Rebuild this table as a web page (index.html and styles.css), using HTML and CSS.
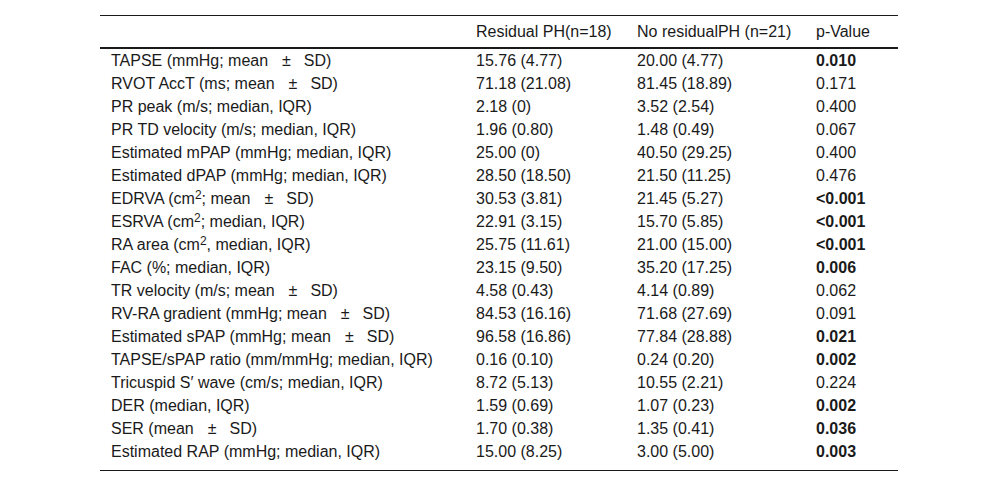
FILE: index.html
```html
<!DOCTYPE html>
<html>
<head>
<meta charset="utf-8">
<link rel="stylesheet" href="styles.css">
</head>
<body>
<table class="tbl">
  <thead>
    <tr>
      <th class="c1"></th>
      <th class="c2">Residual PH(n=18)</th>
      <th class="c3">No residualPH (n=21)</th>
      <th class="c4">p-Value</th>
    </tr>
  </thead>
  <tbody>
    <tr><td>TAPSE (mmHg; mean<span class="pm">±</span>SD)</td><td>15.76 (4.77)</td><td>20.00 (4.77)</td><td><b>0.010</b></td></tr>
    <tr><td>RVOT AccT (ms; mean<span class="pm">±</span>SD)</td><td>71.18 (21.08)</td><td>81.45 (18.89)</td><td>0.171</td></tr>
    <tr><td>PR peak (m/s; median, IQR)</td><td>2.18 (0)</td><td>3.52 (2.54)</td><td>0.400</td></tr>
    <tr><td>PR TD velocity (m/s; median, IQR)</td><td>1.96 (0.80)</td><td>1.48 (0.49)</td><td>0.067</td></tr>
    <tr><td>Estimated mPAP (mmHg; median, IQR)</td><td>25.00 (0)</td><td>40.50 (29.25)</td><td>0.400</td></tr>
    <tr><td>Estimated dPAP (mmHg; median, IQR)</td><td>28.50 (18.50)</td><td>21.50 (11.25)</td><td>0.476</td></tr>
    <tr><td>EDRVA (cm<sup>2</sup>; mean<span class="pm">±</span>SD)</td><td>30.53 (3.81)</td><td>21.45 (5.27)</td><td><b>&lt;0.001</b></td></tr>
    <tr><td>ESRVA (cm<sup>2</sup>; median, IQR)</td><td>22.91 (3.15)</td><td>15.70 (5.85)</td><td><b>&lt;0.001</b></td></tr>
    <tr><td>RA area (cm<sup>2</sup>, median, IQR)</td><td>25.75 (11.61)</td><td>21.00 (15.00)</td><td><b>&lt;0.001</b></td></tr>
    <tr><td>FAC (%; median, IQR)</td><td>23.15 (9.50)</td><td>35.20 (17.25)</td><td><b>0.006</b></td></tr>
    <tr><td>TR velocity (m/s; mean<span class="pm">±</span>SD)</td><td>4.58 (0.43)</td><td>4.14 (0.89)</td><td>0.062</td></tr>
    <tr><td>RV-RA gradient (mmHg; mean<span class="pm">±</span>SD)</td><td>84.53 (16.16)</td><td>71.68 (27.69)</td><td>0.091</td></tr>
    <tr><td>Estimated sPAP (mmHg; mean<span class="pm">±</span>SD)</td><td>96.58 (16.86)</td><td>77.84 (28.88)</td><td><b>0.021</b></td></tr>
    <tr><td>TAPSE/sPAP ratio (mm/mmHg; median, IQR)</td><td>0.16 (0.10)</td><td>0.24 (0.20)</td><td><b>0.002</b></td></tr>
    <tr><td>Tricuspid S′ wave (cm/s; median, IQR)</td><td>8.72 (5.13)</td><td>10.55 (2.21)</td><td>0.224</td></tr>
    <tr><td>DER (median, IQR)</td><td>1.59 (0.69)</td><td>1.07 (0.23)</td><td><b>0.002</b></td></tr>
    <tr><td>SER (mean<span class="pm">±</span>SD)</td><td>1.70 (0.38)</td><td>1.35 (0.41)</td><td><b>0.036</b></td></tr>
    <tr class="last"><td>Estimated RAP (mmHg; median, IQR)</td><td>15.00 (8.25)</td><td>3.00 (5.00)</td><td><b>0.003</b></td></tr>
  </tbody>
</table>
</body>
</html>
```
FILE: styles.css
```css
html, body {
  margin: 0;
  padding: 0;
  background: #ffffff;
}
body {
  padding: 15px 0 0 100px;
  font-family: "Liberation Sans", Arial, sans-serif;
  font-size: 16px;
  color: #1a1a1a;
}
.tbl {
  width: 798px;
  border-collapse: collapse;
  border-top: 1px solid #1a1a1a;
  border-bottom: 1px solid #1a1a1a;
}
.tbl th {
  font-weight: normal;
  text-align: left;
  height: 31px;
  line-height: 31px;
  padding: 0 0 0 11px;
  vertical-align: middle;
  border-bottom: 2px solid #1a1a1a;
}
.tbl td {
  line-height: 23px;
  padding: 0 0 0 11px;
  vertical-align: top;
  white-space: nowrap;
}
.tbl .last td {
  padding-bottom: 7px;
}
.c1 { width: 354px; }
.c2 { width: 150px; }
.c3 { width: 168px; }
.tbl b { font-weight: bold; }
.pm {
  padding: 0 13px 0 14px;
}
.tbl sup {
  font-size: 12px;
  line-height: 0;
  vertical-align: 5px;
}
```
